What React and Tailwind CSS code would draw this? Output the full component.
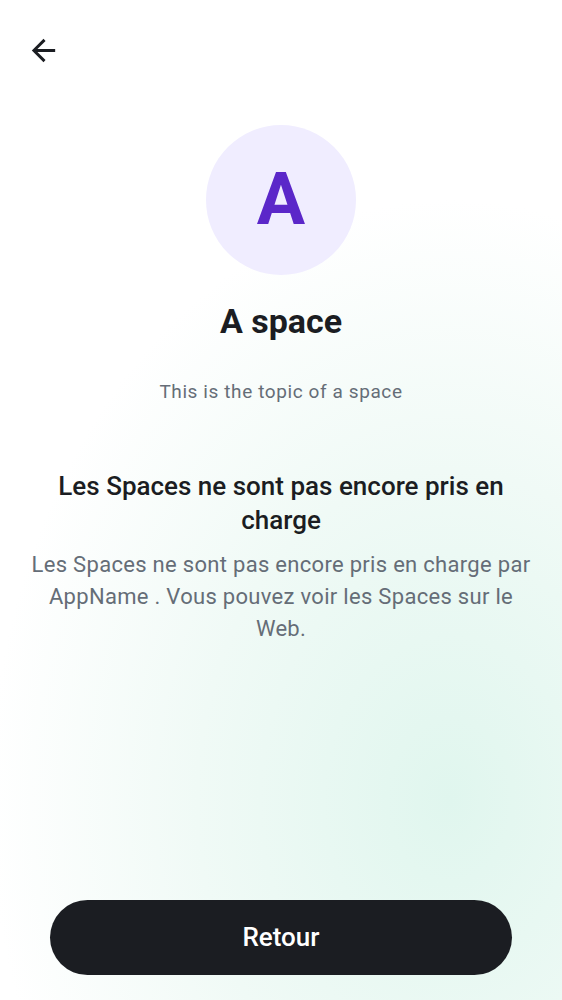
export default function App() {
  return (
    <div
      className="relative flex h-[1000px] w-full flex-col items-center bg-[radial-gradient(ellipse_460px_600px_at_450px_800px,#e0f6ee_0%,#f0faf6_55%,#ffffff_100%)] text-[#1b1d22]"
      style={{ fontFamily: "Roboto, 'Noto Sans', sans-serif" }}
    >
      <div className="flex w-full px-[26px] pt-[33px]">
        <button className="h-[35px] w-[35px]" aria-label="Back">
          <svg viewBox="0 0 24 24" className="h-[35px] w-[35px]" fill="#1b1d22">
            <path d="M20 11H7.83l5.59-5.59L12 4l-8 8 8 8 1.41-1.41L7.83 13H20v-2z" />
          </svg>
        </button>
      </div>

      <div className="mt-[57px] flex h-[150px] w-[150px] items-center justify-center rounded-full bg-[#f0edff]">
        <span className="text-[72px] font-bold leading-none text-[#5b27c9]">A</span>
      </div>

      <h1 className="mt-[26px] text-[34px] font-bold leading-[40px]">A space</h1>

      <p className="mt-[39px] text-[19px] leading-[24px] tracking-[0.6px] text-[#656d77]">
        This is the topic of a space
      </p>

      <div className="mt-[65px] flex w-full flex-col items-center px-[24px] text-center">
        <h2 className="text-[26px] font-medium leading-[34px]">
          Les Spaces ne sont pas encore pris en charge
        </h2>
        <p className="mt-[12px] text-[22px] leading-[32px] tracking-[0.3px] text-[#656d77]">
          Les Spaces ne sont pas encore pris en charge par AppName . Vous pouvez voir les Spaces sur le Web.
        </p>
      </div>

      <div className="mt-auto w-full px-[50px] pb-[25px]">
        <button className="flex h-[75px] w-full items-center justify-center rounded-full bg-[#1b1d22] text-[26px] font-medium text-white">
          Retour
        </button>
      </div>
    </div>
  );
}
